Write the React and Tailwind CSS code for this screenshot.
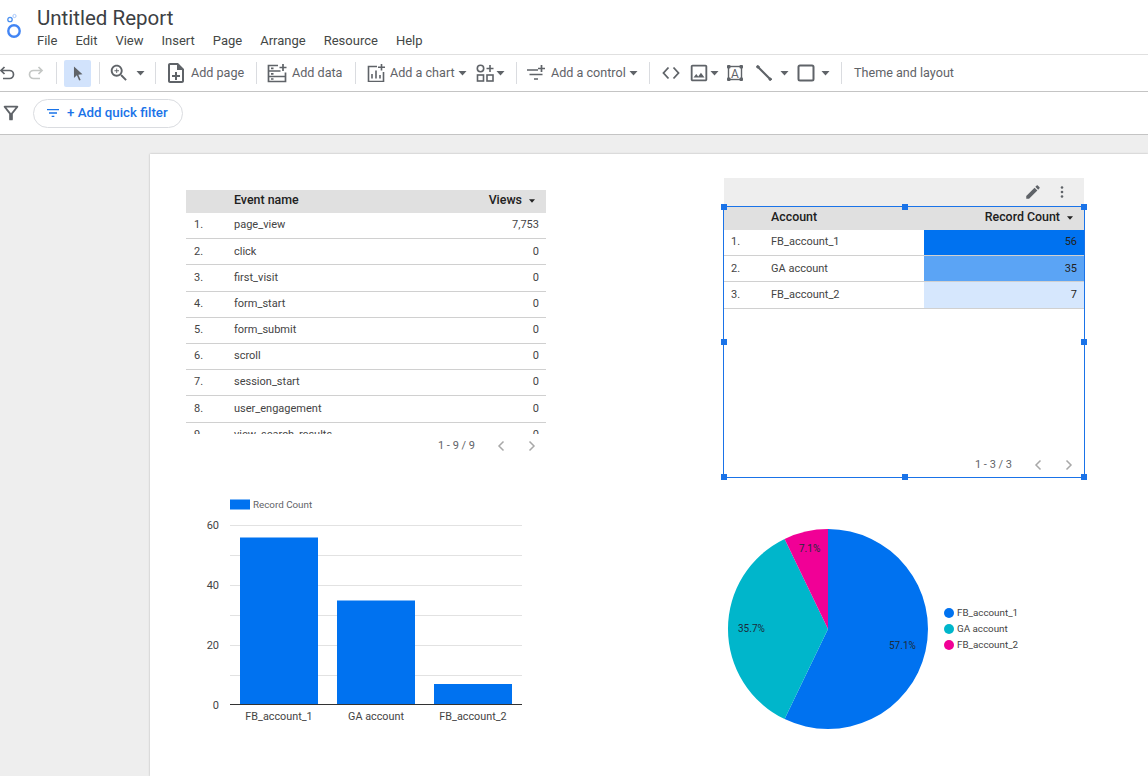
const menus = ['File', 'Edit', 'View', 'Insert', 'Page', 'Arrange', 'Resource', 'Help'];

const events = [
  ['page_view', '7,753'],
  ['click', '0'],
  ['first_visit', '0'],
  ['form_start', '0'],
  ['form_submit', '0'],
  ['scroll', '0'],
  ['session_start', '0'],
  ['user_engagement', '0'],
  ['view_search_results', '0'],
];

const accounts = [
  ['FB_account_1', '56', 'bg-[#0072f0]'],
  ['GA account', '35', 'bg-[#5ba4f5]'],
  ['FB_account_2', '7', 'bg-[#d6e7fd]'],
];

const bars = [
  { label: 'FB_account_1', x: 10, y: 47.5 },
  { label: 'GA account', x: 107, y: 110.5 },
  { label: 'FB_account_2', x: 204, y: 194 },
];

function Icon({ d, size = 18, className = '', color = 'text-[#5f6368]' }) {
  return (
    <svg viewBox="0 0 24 24" width={size} height={size} fill="currentColor" className={`shrink-0 ${color} ${className}`}>
      <path d={d} />
    </svg>
  );
}

function Caret({ className = '' }) {
  return (
    <svg viewBox="0 0 9 5" width="9" height="5" className={`shrink-0 text-[#5f6368] ${className}`} fill="currentColor">
      <path d="M0.5 0h8L4.5 4.5z" />
    </svg>
  );
}

function Sep({ className = '' }) {
  return <div className={`w-px h-[22px] bg-[#dadce0] shrink-0 ${className}`} />;
}

function ToolText({ className = '', children }) {
  return <span className={`text-[12.6px] text-[#5f6368] whitespace-nowrap shrink-0 ${className}`}>{children}</span>;
}

function Pager({ text, offset }) {
  return (
    <div className={`flex items-center justify-end text-[11px] text-[#5f6368] ${offset}`}>
      <span>{text}</span>
      <svg viewBox="0 0 16 16" width="16" height="16" fill="none" stroke="#a8a8a8" strokeWidth="1.5" className="ml-[18px]">
        <path d="M10.5 3.5 6 8l4.5 4.5" />
      </svg>
      <svg viewBox="0 0 16 16" width="16" height="16" fill="none" stroke="#a8a8a8" strokeWidth="1.5" className="ml-[15px]">
        <path d="M5.5 3.5 10 8l-4.5 4.5" />
      </svg>
    </div>
  );
}

function HeaderCell({ title, metric, indent }) {
  return (
    <div className="h-[23px] pb-[2px] bg-[#e0e0e0] flex items-center text-[12.4px] font-medium text-[#212121] shrink-0">
      <span className={indent}>{title}</span>
      <span className="ml-auto">{metric}</span>
      <svg viewBox="0 0 7 4" width="6" height="4" className="ml-[7px] mr-[11px]" fill="#212121">
        <path d="M0 0h7L3.5 4z" />
      </svg>
    </div>
  );
}

function Handle({ className }) {
  return <div className={`absolute w-[6px] h-[6px] bg-[#1a73e8] ${className}`} />;
}

function EventsTable() {
  return (
    <div className="absolute left-[36px] top-[36px] w-[360px]">
      <div className="h-[244px] overflow-hidden">
        <HeaderCell title="Event name" metric="Views" indent="ml-[48px]" />
        {events.map(([name, views], i) => (
          <div key={name} className="h-[26.2px] border-b border-[#d0d0d0] flex items-center text-[11px] text-[#444444]">
            <span className="w-[48px] pl-[8px] shrink-0">{i + 1}.</span>
            <span>{name}</span>
            <span className="ml-auto pr-[7px]">{views}</span>
          </div>
        ))}
      </div>
      <div className="mt-[4px]">
        <Pager text="1 - 9 / 9" offset="pr-[6px]" />
      </div>
    </div>
  );
}

function AccountsTable() {
  return (
    <div className="absolute left-[574px] top-[24px] w-[360px]">
      <div className="h-[28px] bg-[#eeeeee] flex items-center justify-end text-[#5f6368]">
        <Icon size={18} d="M3 17.25V21h3.75L17.81 9.94l-3.75-3.75L3 17.25zM20.71 7.04c.39-.39.39-1.02 0-1.41l-2.34-2.34c-.39-.39-1.02-.39-1.41 0l-1.83 1.83 3.75 3.75 1.83-1.83z" />
        <svg viewBox="0 0 4 14" width="4" height="14" fill="#5f6368" className="ml-[18px] mr-[20px]">
          <circle cx="2" cy="2.5" r="1.3" />
          <circle cx="2" cy="7" r="1.3" />
          <circle cx="2" cy="11.5" r="1.3" />
        </svg>
      </div>
      <div className="relative h-[272px] -mx-px border border-[#1a73e8] flex flex-col">
        <HeaderCell title="Account" metric="Record Count" indent="ml-[47px]" />
        {accounts.map(([name, count, fill], i) => (
          <div key={name} className="h-[26.2px] border-b border-[#d0d0d0] flex items-center text-[11px] text-[#444444]">
            <span className="w-[47px] pl-[7px] shrink-0">{i + 1}.</span>
            <span>{name}</span>
            <span className={`ml-auto w-[160px] h-full flex items-center justify-end pr-[7px] text-[#222222] ${fill}`}>{count}</span>
          </div>
        ))}
        <div className="mt-auto mb-[4px]">
          <Pager text="1 - 3 / 3" offset="pr-[7px]" />
        </div>
        <Handle className="left-[-3px] top-[-3px]" />
        <Handle className="left-[178px] top-[-3px]" />
        <Handle className="right-[-3px] top-[-3px]" />
        <Handle className="left-[-3px] top-[132px]" />
        <Handle className="right-[-3px] top-[132px]" />
        <Handle className="left-[-3px] bottom-[-3px]" />
        <Handle className="left-[178px] bottom-[-3px]" />
        <Handle className="right-[-3px] bottom-[-3px]" />
      </div>
    </div>
  );
}

function BarChart() {
  const grid = [35, 65, 95, 125, 155, 185];
  return (
    <svg width="340" height="240" className="absolute left-[50px] top-[336px] font-['Roboto',sans-serif]">
      <rect x="30" y="9.5" width="20" height="10" fill="#0072f0" />
      <text x="53" y="18" fontSize="9.8" fill="#5f6368">Record Count</text>
      <g transform="translate(30,0)">
        {grid.map((y) => (
          <line key={y} x1="0" x2="292" y1={y + 0.5} y2={y + 0.5} stroke="#e2e2e2" />
        ))}
        {bars.map((b) => (
          <rect key={b.label} x={b.x} y={b.y} width="78" height={214.5 - b.y} fill="#0072f0" />
        ))}
        <line x1="0" x2="292" y1="214.5" y2="214.5" stroke="#333333" />
      </g>
      {[['60', 39], ['40', 99], ['20', 159], ['0', 218.5]].map(([t, y]) => (
        <text key={t} x="19" y={y} fontSize="11" textAnchor="end" fill="#444444">{t}</text>
      ))}
      {bars.map((b) => (
        <text key={b.label} x={30 + b.x + 39} y="230" fontSize="10.8" textAnchor="middle" fill="#444444">{b.label}</text>
      ))}
    </svg>
  );
}

function PieChart() {
  const legend = [
    ['FB_account_1', '#0072f0', 88],
    ['GA account', '#00b6cb', 104],
    ['FB_account_2', '#f10096', 120],
  ];
  return (
    <svg width="320" height="210" className="absolute left-[570px] top-[370px] font-['Roboto',sans-serif]">
      <path d="M108 105 V5 A100 100 0 1 1 64.6 195.1 Z" fill="#0072f0" />
      <path d="M108 105 L64.6 195.1 A100 100 0 0 1 64.6 14.9 Z" fill="#00b6cb" />
      <path d="M108 105 L64.6 14.9 A100 100 0 0 1 108 5 Z" fill="#f10096" />
      <text x="79" y="27.5" fontSize="10" fill="#1c2b3a">7.1%</text>
      <text x="18" y="107.5" fontSize="10" fill="#1c2b3a">35.7%</text>
      <text x="169" y="125" fontSize="10" fill="#1c2b3a">57.1%</text>
      {legend.map(([label, color, y]) => (
        <g key={label}>
          <circle cx="229" cy={y + 1} r="5" fill={color} />
          <text x="237" y={y + 4} fontSize="9.8" fill="#444444">{label}</text>
        </g>
      ))}
    </svg>
  );
}

export default function App() {
  return (
    <div className="h-[776px] w-[1148px] overflow-hidden flex flex-col bg-white font-['Roboto',sans-serif]">
      {/* title and menu */}
      <div className="h-[55px] shrink-0 border-b border-[#e0e0e0] flex">
        <div className="w-[37px] shrink-0">
          <svg viewBox="0 0 30 30" width="30" height="30" fill="none" className="mt-[12px]">
            <circle cx="14" cy="19" r="5.7" stroke="#4285f4" strokeWidth="2.4" />
            <circle cx="10" cy="7.5" r="2.2" stroke="#4a90f0" strokeWidth="1.3" />
            <circle cx="14.5" cy="4" r="1.6" stroke="#a8c7fa" strokeWidth="1" />
          </svg>
        </div>
        <div>
          <div className="text-[20.5px] leading-[24px] mt-[6px] text-[#3c4043]">Untitled Report</div>
          <div className="flex gap-[18px] text-[13px] leading-[16px] mt-[3px] text-[#444746]">
            {menus.map((m) => (
              <span key={m}>{m}</span>
            ))}
          </div>
        </div>
      </div>

      {/* toolbar */}
      <div className="h-[37px] shrink-0 border-b border-[#c4c4c4] flex items-center">
        <svg viewBox="0 0 16 16" width="16" height="16" fill="none" stroke="#5f6368" strokeWidth="1.7" className="ml-[-1px] shrink-0">
          <path d="M5.5 2 2 5.5 5.5 9M2 5.5h8.5a4 4 0 0 1 0 8H4" />
        </svg>
        <svg viewBox="0 0 16 16" width="16" height="16" fill="none" stroke="#c4c7c5" strokeWidth="1.7" className="ml-[13px] shrink-0">
          <path d="M10.5 2 14 5.5 10.5 9M14 5.5H5.5a4 4 0 0 0 0 8H12" />
        </svg>
        <Sep className="ml-[12px]" />
        <div className="ml-[7px] w-[27px] h-[27px] bg-[#d2e3fc] rounded-[2px] flex items-center justify-center shrink-0">
          <Icon size={17} d="M7 2l12 11.2-5.8.5 3.3 7.3-2.2 1-3.2-7.4L7 18.5z" />
        </div>
        <Sep className="ml-[8px]" />
        <Icon size={22} className="ml-[8px]" d="M15.5 14h-.79l-.28-.27C15.41 12.59 16 11.11 16 9.5 16 5.91 13.09 3 9.5 3S3 5.91 3 9.5 5.91 16 9.5 16c1.61 0 3.09-.59 4.23-1.57l.27.28v.79l5 4.99L20.49 19l-4.99-5zm-6 0C7.01 14 5 11.99 5 9.5S7.01 5 9.5 5 14 7.01 14 9.5 11.99 14 9.5 14zm2.5-4h-2v2H9v-2H7V9h2V7h1v2h2v1z" />
        <Caret className="ml-[6px]" />
        <Sep className="ml-[10px]" />
        <Icon size={24} className="ml-[8px]" d="M13 11h-2v3H8v2h3v3h2v-3h3v-2h-3zm1-9H6c-1.1 0-2 .9-2 2v16c0 1.1.89 2 1.99 2H18c1.1 0 2-.9 2-2V8l-6-6zm4 18H6V4h7v5h5v11z" />
        <ToolText className="ml-[3px] w-[53px]">Add page</ToolText>
        <Sep className="ml-[12px]" />
        <svg viewBox="0 0 20 20" width="20" height="20" fill="none" stroke="#5f6368" strokeWidth="1.7" className="ml-[10px] shrink-0">
          <path d="M11 2.5H1.5v16h17V9.5M1.5 8h12M1.5 13.5h17M4 5.3h2.5M4 10.8h2.5M4 16h2.5" />
          <path d="M16 1v7M12.5 4.5h7" />
        </svg>
        <ToolText className="ml-[5px] w-[50px]">Add data</ToolText>
        <Sep className="ml-[13px]" />
        <svg viewBox="0 0 18 18" width="18" height="18" fill="none" stroke="#5f6368" strokeWidth="1.6" className="ml-[11px] shrink-0">
          <path d="M10 2.5H1.5v15h15V8M5 14.5V10M9 14.5V6.5M13 14.5V11" />
          <path d="M14.5 0v6.5M11 3.2h7" />
        </svg>
        <ToolText className="ml-[5px] w-[64px]">Add a chart</ToolText>
        <Caret className="ml-[4px]" />
        <svg viewBox="0 0 18 18" width="18" height="18" fill="none" stroke="#5f6368" strokeWidth="1.6" className="ml-[9px] shrink-0">
          <circle cx="4.5" cy="4.5" r="3.2" />
          <rect x="1.5" y="11" width="6" height="6" />
          <rect x="11" y="11" width="6" height="6" />
          <path d="M14 1v7M10.5 4.5h7" />
        </svg>
        <Caret className="ml-[2px]" />
        <Sep className="ml-[11px]" />
        <svg viewBox="0 0 18 18" width="18" height="18" fill="none" stroke="#5f6368" strokeWidth="1.7" className="ml-[10px] shrink-0">
          <path d="M0 6h11M2.5 10.5h13M7 15h4" />
          <path d="M14.5 1v7M11 4.5h7" />
        </svg>
        <ToolText className="ml-[6px] w-[74px]">Add a control</ToolText>
        <Caret className="ml-[4px]" />
        <Sep className="ml-[11px]" />
        <svg viewBox="0 0 18 18" width="18" height="18" fill="none" stroke="#5f6368" strokeWidth="1.8" className="ml-[12px] shrink-0">
          <path d="M6.5 3.5 1.5 9l5 5.5M11.5 3.5l5 5.5-5 5.5" />
        </svg>
        <Icon size={22} className="ml-[8px]" d="M19 5v14H5V5h14m0-2H5c-1.1 0-2 .9-2 2v14c0 1.1.9 2 2 2h14c1.1 0 2-.9 2-2V5c0-1.1-.9-2-2-2zm-4.86 8.86l-3 3.87L9 13.14 6 17h12l-3.86-5.14z" />
        <Caret />
        <svg viewBox="0 0 18 18" width="18" height="18" className="ml-[7px] shrink-0" fill="#5f6368">
          <rect x="2.5" y="2.5" width="13" height="13" fill="none" stroke="#5f6368" strokeWidth="1.4" />
          <rect x="1" y="1" width="3.5" height="3.5" rx="1" />
          <rect x="13.5" y="1" width="3.5" height="3.5" rx="1" />
          <rect x="1" y="13.5" width="3.5" height="3.5" rx="1" />
          <rect x="13.5" y="13.5" width="3.5" height="3.5" rx="1" />
          <text x="9" y="13.5" fontSize="12" textAnchor="middle">A</text>
        </svg>
        <svg viewBox="0 0 18 18" width="18" height="18" className="ml-[11px] shrink-0" fill="#5f6368" stroke="#5f6368" strokeLinecap="round">
          <path d="M3 3l12 12" strokeWidth="2.2" />
          <circle cx="2.8" cy="2.8" r="1.2" />
          <circle cx="15.2" cy="15.2" r="1.2" />
        </svg>
        <Caret className="ml-[7px]" />
        <svg viewBox="0 0 18 18" width="18" height="18" className="ml-[8px] shrink-0" fill="none" stroke="#5f6368" strokeWidth="2">
          <rect x="1.5" y="1.5" width="15" height="15" rx="1.5" />
        </svg>
        <Caret className="ml-[6px]" />
        <Sep className="ml-[11px]" />
        <ToolText className="ml-[12px]">Theme and layout</ToolText>
      </div>

      {/* filter bar */}
      <div className="h-[43px] shrink-0 border-b border-[#c4c4c4] flex items-center">
        <Icon size={22} d="M7 6h10l-5.01 6.3L7 6zm-2.75-.39C6.27 8.2 10 13 10 13v6c0 .55.45 1 1 1h2c.55 0 1-.45 1-1v-6s3.72-4.8 5.74-7.39C20.25 4.95 19.78 4 18.95 4H5.04c-.83 0-1.3.95-.79 1.61z" />
        <div className="ml-[11px] w-[150px] h-[29px] rounded-full border border-[#dadce0] flex items-center pl-[11px]">
          <Icon size={16} color="text-[#1a73e8]" d="M10 18h4v-2h-4v2zM3 6v2h18V6H3zm3 7h12v-2H6v2z" />
          <span className="ml-[6px] mb-[1px] text-[13.3px] font-medium text-[#1a73e8] whitespace-nowrap">+ Add quick filter</span>
        </div>
      </div>

      {/* report canvas */}
      <div className="flex-1 bg-[#eeeeee] pl-[150px] pt-[19px]">
        <div className="relative h-full bg-white shadow-[0_0_2px_rgba(0,0,0,0.25)]">
          <EventsTable />
          <AccountsTable />
          <BarChart />
          <PieChart />
        </div>
      </div>
    </div>
  );
}
